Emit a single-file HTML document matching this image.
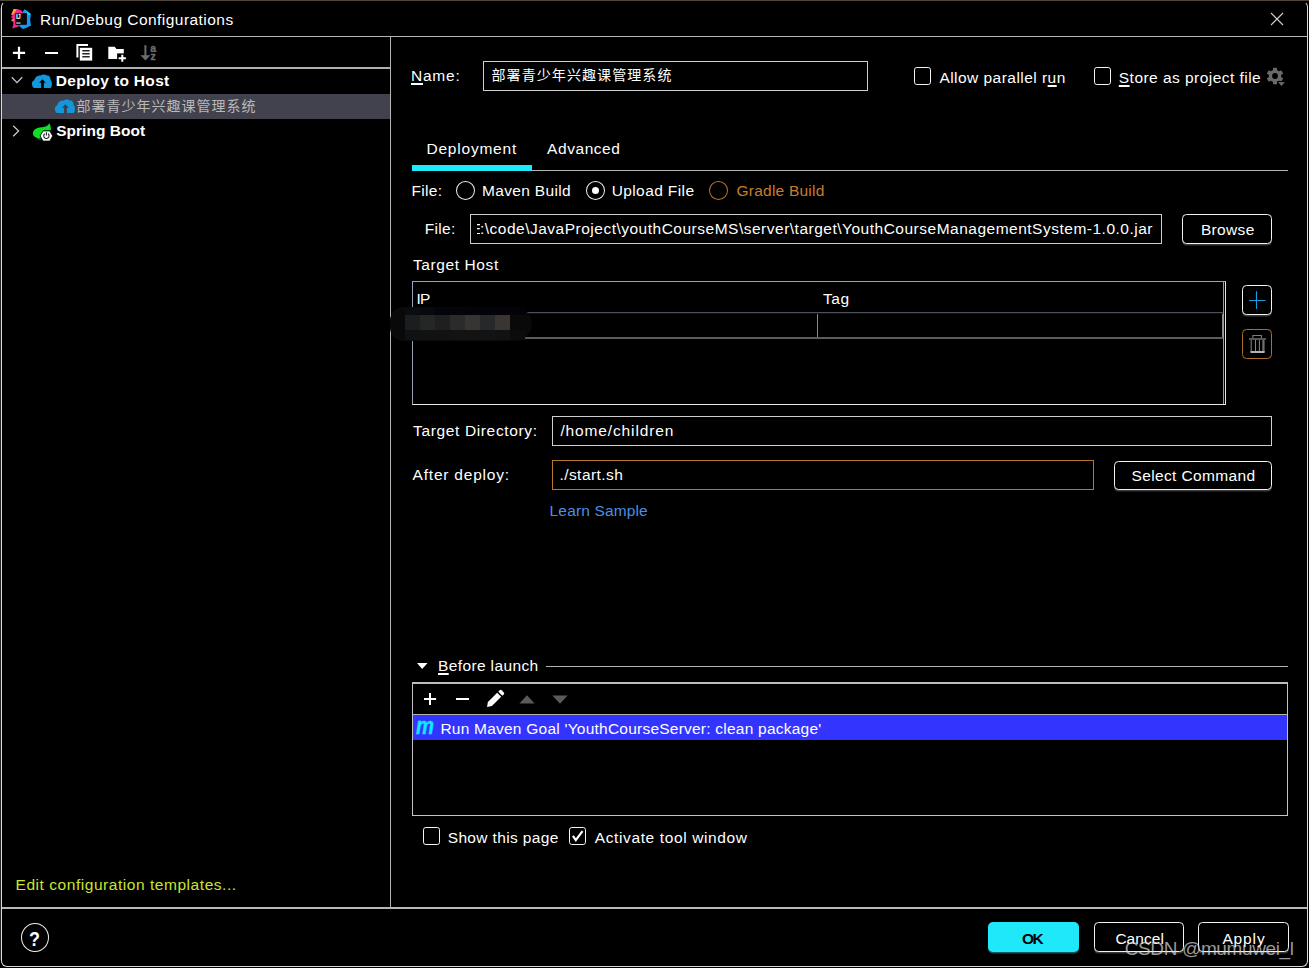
<!DOCTYPE html>
<html lang="zh-CN">
<head>
<meta charset="utf-8">
<title>Run/Debug Configurations</title>
<style>
html,body{margin:0;padding:0;background:#000;}
body{width:1309px;height:968px;position:relative;overflow:hidden;font-family:"Liberation Sans","Noto Sans CJK SC",sans-serif;color:#fff;}
.abs,.t,.ln,.box,.btn,.cb,.rd{position:absolute;box-sizing:border-box;}
.t{white-space:nowrap;line-height:24px;height:24px;}
.t u{text-decoration:underline;text-underline-offset:1.500px;text-decoration-thickness:1.500px;}
.ln{background:#b4b4b4;}
.box{border:1px solid #cecece;background:#000;}
.btn{border:1.600px solid #f2f2f2;border-radius:4.500px;background:#000;box-shadow:0 1.5px 0 #3a3a3a;}
.cb{width:17.500px;height:17.900px;border:1.600px solid #f4f4f4;border-radius:2.800px;background:#000;}
.rd{width:19.300px;height:19.200px;border:1.500px solid #f0f0f0;border-radius:50%;background:#000;}
svg{position:absolute;overflow:visible;}
</style>
</head>
<body>
<!-- outside strip + window frame -->
<div class="abs" id="topstrip" style="left:0;top:0;width:1309px;height:1px;background:#4f4538;"></div>
<div class="abs" id="leftedge" style="left:0;top:8px;width:1px;height:952px;background:#262626;"></div>
<div class="abs" id="frame" style="left:1px;top:1px;width:1307px;height:966px;border:1px solid #dadada;border-top-color:#000;border-radius:6px;background:#000;"></div>

<!-- title bar -->
<div class="ln" style="left:2px;top:36px;width:1305px;height:1px;"></div>
<!-- left toolbar bottom line -->
<div class="ln" style="left:2px;top:67px;width:388px;height:2px;background:#b0b0b0;"></div>
<!-- vertical divider -->
<div class="ln" style="left:390px;top:37px;width:1px;height:871px;"></div>
<!-- bottom separator -->
<div class="ln" style="left:2px;top:907px;width:1305px;height:2px;background:#b8b8b8;"></div>

<!-- tree selection -->
<div class="abs" id="sel" style="left:2px;top:94px;width:388px;height:25px;background:#42424f;"></div>

<!-- app icon -->
<svg id="ijicon" style="left:0px;top:0px;" width="40" height="36" viewBox="0 0 40 36">
  <polygon points="13.5,9.200 17,9 21,10.200 23,12.500 23,14 16,14 16,25 19.500,25 18.500,26.500 12.300,28.600 13.500,23.500 12.800,21 11.500,20.500 13,19 11,17 12.500,15.500 11.200,14.500 12.500,12" fill="#f3268a"/>
  <polygon points="13.500,9.200 16.800,9 15.600,11 14,13.500 12,14.800 11.200,14.500 12.500,12" fill="#fbb01f"/>
  <polygon points="11,20.300 13.300,18.400 14.300,20 13,21.400" fill="#fb8c1c"/>
  <polygon points="24.500,9.200 30.800,14 30.200,20 31,25.500 26,28 22.800,28.900 19.200,26.300 20,24.600 26.700,24.600 26.700,13.300 22.800,13.300 23,11.500" fill="#129cf0"/>
  <polygon points="24.500,9.200 30.800,14 28.300,15.300 26.700,12.300" fill="#18d2f4"/>
  <rect x="15.300" y="13.300" width="11.400" height="11.300" fill="#0d0609"/>
  <rect x="16.200" y="22.500" width="4.300" height="1.100" fill="#e6e6e6"/>
  <text x="15.900" y="18.700" font-family="Liberation Sans, sans-serif" font-size="6.400" font-weight="700" fill="#fff" letter-spacing="-0.300">IJ</text>
</svg>
<!-- close X -->
<svg style="left:1270px;top:12px;" width="14" height="14" viewBox="0 0 14 14"><path d="M1 1l12 12M13 1L1 13" stroke="#d0d0d0" stroke-width="1.1" fill="none"/></svg>

<!-- left toolbar -->
<svg style="left:12px;top:46px;" width="14" height="14" viewBox="0 0 14 14"><path d="M7 .8v12.2M.9 6.9h12.2" stroke="#fff" stroke-width="2.2" fill="none"/></svg>
<div class="abs" style="left:44.5px;top:51.5px;width:13px;height:2.4px;background:#fff;"></div>
<svg style="left:76px;top:44px;" width="17" height="17" viewBox="0 0 17 17">
  <path d="M1.4 13.5V1.1H12" stroke="#fff" stroke-width="2" fill="none"/>
  <rect x="3.8" y="3.8" width="12.4" height="12.8" fill="#fff"/>
  <path d="M6.3 6.8h7.4M6.3 9.8h7.4M6.3 12.8h7.4" stroke="#222" stroke-width="1.5" fill="none"/>
</svg>
<svg style="left:100px;top:40px;" width="30" height="26" viewBox="100 40 30 26">
  <path d="M108.300 46.700h6.400l1.800 2.200h7.300v10.200h-15.500z" fill="#fff"/>
  <path d="M117.100 53.400h7v6h-7z" fill="#000"/>
  <path d="M122.300 54.800v7M118.600 58.200h7.300" stroke="#fff" stroke-width="2" fill="none"/>
</svg>
<svg style="left:138px;top:40px;" width="24" height="26" viewBox="138 40 24 26">
  <path d="M145.400 45.200v11" stroke="#6c6c6c" stroke-width="2" fill="none"/>
  <path d="M140.400 55.300h10l-5 5.300z" fill="#6c6c6c"/>
  <text x="150.200" y="51.700" font-family="Liberation Sans, sans-serif" font-size="10.500" font-weight="700" fill="#6c6c6c" stroke="#6c6c6c" stroke-width=".35">a</text>
  <text x="150.600" y="60.400" font-family="Liberation Sans, sans-serif" font-size="10.500" font-weight="700" fill="#6c6c6c" stroke="#6c6c6c" stroke-width=".35">z</text>
</svg>

<!-- tree chevrons -->
<svg style="left:11px;top:76px;" width="12" height="8" viewBox="0 0 12 8"><path d="M.8 1.2l5.2 5.4 5.2-5.4" stroke="#c8c8c8" stroke-width="1.3" fill="none"/></svg>
<svg style="left:12px;top:125px;" width="8" height="12" viewBox="0 0 8 12"><path d="M1.2 .8l5.4 5.2-5.4 5.2" stroke="#c8c8c8" stroke-width="1.3" fill="none"/></svg>

<!-- cloud icons -->
<svg style="left:28px;top:70px;" width="60" height="48" viewBox="28 70 60 48">
  <path d="M34.200 88.100C32.600 87.600 31.900 85.500 31.900 83.500C31.900 81.800 33 80.600 34.300 80.200C34.800 78.300 35.800 77 37 76.300C38.500 75.300 40 75.400 41 75.600C41.800 74.800 42.800 74.500 43.800 74.500C45 74.500 46 75 46.800 75.600C48 75.400 49 75.800 49.500 76.500C50.300 77.500 50.600 78.800 50.600 80C51.500 81 51.900 82.500 51.900 84C51.900 86 51.200 87.500 50.600 88.100Z" fill="#1397dc"/>
  <path d="M42.400 79.200L45.800 82.700H43.900V88.300H41.100V82.700H39.100Z" fill="#000"/>
  <g transform="translate(23 25)">
    <path d="M34.200 88.100C32.600 87.600 31.900 85.500 31.900 83.500C31.900 81.800 33 80.600 34.300 80.200C34.800 78.300 35.800 77 37 76.300C38.500 75.300 40 75.400 41 75.600C41.800 74.800 42.800 74.500 43.800 74.500C45 74.500 46 75 46.800 75.600C48 75.400 49 75.800 49.500 76.500C50.300 77.500 50.600 78.800 50.600 80C51.500 81 51.900 82.500 51.900 84C51.900 86 51.200 87.500 50.600 88.100Z" fill="#1397dc"/>
    <path d="M42.400 79.200L45.800 82.700H43.900V88.300H41.100V82.700H39.100Z" fill="#3d3d4a"/>
  </g>
</svg>
<!-- spring boot icon -->
<svg style="left:28px;top:118px;" width="32" height="28" viewBox="28 118 32 28">
  <path d="M49.600 123.300c.9 2.200 1.400 4.600 1.300 7l-7.500 .3-3 5.300 1.300 2.200c-3 .3-5.600 .2-7.300-1.600-2.300-2.400-1.700-5.800 1.100-7.600 2.500-1.600 5.700-1.300 8.300-1.900 2.500-.6 4.500-1.700 5.800-3.700z" fill="#0be322"/>
  <path d="M36.800 138.300c1.400 .4 2.800 .5 4.300 .4l.4 .7c-1.700 .3-3.400 0-4.700-1.100z" fill="#0be322"/>
  <path d="M43 130.900h6.800l2.900 5-2.900 5.200H43l-2.900-5.200z" fill="#fff" stroke="#000" stroke-width=".8"/>
  <path d="M44.700 133.700a2.700 2.700 0 1 0 3.400 0" fill="none" stroke="#222" stroke-width="1.100"/>
  <path d="M46.400 132.300v3.300" stroke="#222" stroke-width="1.100"/>
</svg>

<!-- gear -->
<svg style="left:1267px;top:68px;" width="20" height="20" viewBox="0 0 20 20">
  <g fill="#6a6a6a">
   <circle cx="8" cy="8" r="6.200"/>
   <rect x="6" y="-0.300" width="4" height="16.600" rx=".6"/>
   <rect x="6" y="-0.300" width="4" height="16.600" rx=".6" transform="rotate(60 8 8)"/>
   <rect x="6" y="-0.300" width="4" height="16.600" rx=".6" transform="rotate(120 8 8)"/>
   <path d="M11 14h6.900l-3.450 4z"/>
  </g>
  <circle cx="8" cy="8" r="2.900" fill="#000"/>
  <path d="M10.300 13.600h8.200" stroke="#000" stroke-width=".9"/>
</svg>

<!-- before-launch toolbar -->
<svg style="left:424px;top:693px;" width="13" height="13" viewBox="0 0 13 13"><path d="M6 0v12.100M0 6h12.100" stroke="#fff" stroke-width="2" fill="none"/></svg>
<div class="abs" style="left:456px;top:698px;width:12.500px;height:2.200px;background:#fff;"></div>
<svg style="left:486px;top:689px;" width="19" height="19" viewBox="0 0 19 19">
  <path d="M1 18l.9-4.900L11.200 3.800l4 4L5.900 17.100z" fill="#fff"/>
  <path d="M12.300 2.700l1.500-1.500a1.300 1.300 0 0 1 1.800 0l2.200 2.200a1.300 1.300 0 0 1 0 1.800l-1.500 1.500z" fill="#fff"/>
</svg>
<svg style="left:519px;top:695px;" width="16" height="9" viewBox="0 0 16 9"><path d="M8 .3l7.600 8.200H.4z" fill="#5a5a5a"/></svg>
<svg style="left:552px;top:695px;" width="16" height="9" viewBox="0 0 16 9"><path d="M8 8.700L15.600 .5H.4z" fill="#5a5a5a"/></svg>


<!-- Name input -->
<div class="box" style="left:483px;top:61px;width:385px;height:30px;"></div>
<div class="cb" style="left:913.700px;top:67.200px;"></div>
<div class="cb" style="left:1093.700px;top:67.200px;"></div>

<!-- tabs -->
<div class="ln" style="left:412px;top:170px;width:876px;height:1px;"></div>
<div class="abs" style="left:412px;top:165px;width:120px;height:6px;background:#1fe8fb;"></div>

<!-- radios -->
<div class="rd" style="left:456.100px;top:181px;"></div>
<div class="rd" style="left:586.200px;top:181px;"></div>
<div class="abs" style="left:592.400px;top:187.200px;width:7px;height:7px;border-radius:50%;background:#fff;"></div>
<div class="rd" style="left:709px;top:181px;border-color:#b9762c;"></div>

<!-- file input -->
<div class="box" style="left:470px;top:214px;width:692px;height:30px;"></div>
<div class="btn" style="left:1182.200px;top:214px;width:89.800px;height:29.800px;"></div>

<!-- target host table -->
<div class="abs" style="left:412px;top:281px;width:814px;height:124px;border:1px solid #96a3b6;border-right-color:#e8e8e8;border-bottom-color:#e8e8e8;"></div>
<div class="abs" style="left:413px;top:282px;width:811px;height:122px;border-right:1px solid #929fb3;"></div>
<div class="ln" style="left:413px;top:312px;width:810px;height:1px;background:#50505c;"></div>
<div class="ln" style="left:413px;top:313px;width:810px;height:1px;background:#000094;"></div>
<div class="ln" style="left:817px;top:314px;width:1px;height:24px;background:#8a8a8a;"></div>
<div class="ln" style="left:1222px;top:314px;width:1px;height:24px;background:#8a8a8a;"></div>
<div class="ln" style="left:413px;top:337px;width:810px;height:2px;background:#5c5c5c;"></div>
<!-- blur blob -->
<div class="abs" style="left:390px;top:307px;width:142px;height:34px;border-radius:16px 20px 20px 16px;background:#09090a;"></div>
<div class="abs" style="left:405px;top:307px;width:15px;height:8px;background:#0b0c11;"></div>
<div class="abs" style="left:420px;top:307px;width:15px;height:8px;background:#08090f;"></div>
<div class="abs" style="left:435px;top:307px;width:15px;height:8px;background:#04040c;"></div>
<div class="abs" style="left:450px;top:307px;width:15px;height:8px;background:#04040b;"></div>
<div class="abs" style="left:465px;top:307px;width:15px;height:8px;background:#03030a;"></div>
<div class="abs" style="left:480px;top:307px;width:15px;height:8px;background:#03030a;"></div>
<div class="abs" style="left:495px;top:307px;width:15px;height:8px;background:#030309;"></div>
<div class="abs" style="left:510px;top:307px;width:15px;height:8px;background:#020208;"></div>
<div class="abs" style="left:405px;top:315px;width:15px;height:15px;background:#1c1d1f;"></div>
<div class="abs" style="left:420px;top:315px;width:15px;height:15px;background:#252726;"></div>
<div class="abs" style="left:435px;top:315px;width:15px;height:15px;background:#1f1f1f;"></div>
<div class="abs" style="left:450px;top:315px;width:15px;height:15px;background:#2c2b29;"></div>
<div class="abs" style="left:465px;top:315px;width:15px;height:15px;background:#363533;"></div>
<div class="abs" style="left:480px;top:315px;width:15px;height:15px;background:#27282a;"></div>
<div class="abs" style="left:495px;top:315px;width:15px;height:15px;background:#3b3532;"></div>
<div class="abs" style="left:405px;top:330px;width:15px;height:10px;background:#101113;"></div>
<div class="abs" style="left:420px;top:330px;width:15px;height:10px;background:#111211;"></div>
<div class="abs" style="left:435px;top:330px;width:15px;height:10px;background:#121212;"></div>
<div class="abs" style="left:450px;top:330px;width:15px;height:10px;background:#131313;"></div>
<div class="abs" style="left:465px;top:330px;width:15px;height:10px;background:#131313;"></div>
<div class="abs" style="left:480px;top:330px;width:15px;height:10px;background:#131313;"></div>
<div class="abs" style="left:495px;top:330px;width:15px;height:10px;background:#121212;"></div>
<div class="abs" style="left:510px;top:330px;width:15px;height:10px;background:#0c0c0c;"></div>

<!-- add / delete buttons -->
<div class="btn" style="left:1242px;top:285px;width:30px;height:30px;"></div>
<svg style="left:1242px;top:285px;" width="30" height="30" viewBox="0 0 30 30"><path d="M14.500 6.300v17.700M7 15.500h16.500" stroke="#1a9be0" stroke-width="1.100" fill="none"/></svg>
<div class="btn" style="left:1242px;top:329px;width:30px;height:30px;border-color:#ad6f27;box-shadow:none;"></div>
<svg style="left:1242px;top:329px;" width="30" height="30" viewBox="0 0 30 30"><rect x="7" y="9.100" width="17" height="1.800" fill="#5e5e5e"/><path d="M10.900 9.200V6.500h8.500v2.700" stroke="#7c7c7c" stroke-width="1.100" fill="none"/><rect x="8.500" y="11" width="1.500" height="12" fill="#5a5a5a"/><rect x="20.300" y="11" width="2.300" height="12" fill="#6e6e6e"/><rect x="8.500" y="22" width="14.100" height="2" fill="#b4b4b4"/><path d="M13.500 11v11M17.400 11v11" stroke="#858585" stroke-width="1" fill="none"/></svg>

<!-- target dir / after deploy -->
<div class="box" style="left:552px;top:416px;width:720px;height:30px;"></div>
<div class="box" style="left:552px;top:460px;width:542px;height:30px;border-color:#b9762c;"></div>
<div class="btn" style="left:1113.800px;top:460.600px;width:158.300px;height:29.600px;"></div>

<!-- before launch -->
<svg style="left:416px;top:662px;" width="12" height="8" viewBox="0 0 12 8"><path d="M1 1h10.5L6.2 7z" fill="#fff"/></svg>
<div class="ln" style="left:546px;top:666px;width:742px;height:1px;"></div>
<div class="abs" style="left:412px;top:682px;width:876px;height:134px;border:1px solid #c4c4c4;border-top:2px solid #bdbdbd;"></div>
<div class="ln" style="left:413px;top:714px;width:874px;height:1px;"></div>
<div class="abs" style="left:413px;top:715px;width:874px;height:25px;background:#3434ff;"></div>

<div class="cb" style="left:422.800px;top:827.200px;"></div>
<div class="cb" style="left:568.800px;top:827.200px;"></div>
<svg style="left:568.800px;top:827.200px;" width="18" height="18" viewBox="0 0 18 18"><path d="M3.900 8.900l2.900 4.200 6.700-9" stroke="#fff" stroke-width="2.200" fill="none"/></svg>

<!-- bottom buttons -->
<div class="abs" style="left:21px;top:923px;width:28.300px;height:29.300px;border:1.400px solid #f0f0f0;border-radius:50%;"></div>
<div class="abs" style="left:988.300px;top:922.300px;width:90.600px;height:30.200px;border-radius:5px;background:#1fe8fb;box-shadow:0 1.5px 0 #0a5a66;"></div>
<div class="btn" style="left:1093.500px;top:922.300px;width:90.500px;height:30.200px;"></div>
<div class="btn" style="left:1198.200px;top:922.300px;width:90.500px;height:30.200px;"></div>

<div class="abs" style="left:477px;top:215px;width:3.300px;height:28px;overflow:hidden;"><span class="t" style="left:-6.300px;top:2px;font-size:15.500px;color:#fff;">E</span></div>
<span class="t" id="title" style="left:40.00px;top:8.00px;font-size:15.5px;font-weight:400;color:#fff;letter-spacing:0.456px;">Run/Debug Configurations</span>
<span class="t" id="dep" style="left:55.70px;top:69.00px;font-size:15.5px;font-weight:700;color:#fff;letter-spacing:0.323px;">Deploy to Host</span>
<span class="t" id="cn1" style="left:76.60px;top:94.00px;font-size:14px;font-weight:400;color:#b9b9b9;letter-spacing:1.0px;">部署青少年兴趣课管理系统</span>
<span class="t" id="sb" style="left:56.20px;top:119.00px;font-size:15.5px;font-weight:700;color:#fff;letter-spacing:0.028px;">Spring Boot</span>
<span class="t" id="name" style="left:411.00px;top:64.00px;font-size:15.5px;font-weight:400;color:#fff;letter-spacing:0.764px;"><u>N</u>ame:</span>
<span class="t" id="cn2" style="left:491.50px;top:63.00px;font-size:14px;font-weight:400;color:#fff;letter-spacing:1.082px;">部署青少年兴趣课管理系统</span>
<span class="t" id="apr" style="left:939.40px;top:66.00px;font-size:15.5px;font-weight:400;color:#fff;letter-spacing:0.464px;">Allow parallel r<u>u</u>n</span>
<span class="t" id="spf" style="left:1118.80px;top:66.00px;font-size:15.5px;font-weight:400;color:#fff;letter-spacing:0.462px;"><u>S</u>tore as project file</span>
<span class="t" id="tab1" style="left:426.50px;top:137.00px;font-size:15.5px;font-weight:400;color:#fff;letter-spacing:0.778px;">Deployment</span>
<span class="t" id="tab2" style="left:547.10px;top:137.00px;font-size:15.5px;font-weight:400;color:#fff;letter-spacing:0.554px;">Advanced</span>
<span class="t" id="file1" style="left:411.60px;top:179.00px;font-size:15.5px;font-weight:400;color:#fff;letter-spacing:0.306px;">File:</span>
<span class="t" id="mvn" style="left:482.00px;top:179.00px;font-size:15.5px;font-weight:400;color:#fff;letter-spacing:0.332px;">Maven Build</span>
<span class="t" id="upl" style="left:611.70px;top:179.00px;font-size:15.5px;font-weight:400;color:#fff;letter-spacing:0.392px;">Upload File</span>
<span class="t" id="grd" style="left:736.60px;top:179.00px;font-size:15.5px;font-weight:400;color:#c97d2c;letter-spacing:0.22px;">Gradle Build</span>
<span class="t" id="file2" style="left:424.70px;top:217.00px;font-size:15.5px;font-weight:400;color:#fff;letter-spacing:0.306px;">File:</span>
<span class="t" id="browse" style="left:1200.90px;top:218.00px;font-size:15.5px;font-weight:400;color:#fff;letter-spacing:0.347px;">Browse</span>
<span class="t" id="th" style="left:412.90px;top:253.00px;font-size:15.5px;font-weight:400;color:#fff;letter-spacing:0.605px;">Target Host</span>
<span class="t" id="ip" style="left:416.50px;top:287.00px;font-size:15.5px;font-weight:400;color:#fff;letter-spacing:-0.706px;">IP</span>
<span class="t" id="tag" style="left:822.90px;top:287.00px;font-size:15.5px;font-weight:400;color:#fff;letter-spacing:0.665px;">Tag</span>
<span class="t" id="td" style="left:413.00px;top:419.00px;font-size:15.5px;font-weight:400;color:#fff;letter-spacing:0.644px;">Target Directory:</span>
<span class="t" id="home" style="left:560.40px;top:419.00px;font-size:15.5px;font-weight:400;color:#fff;letter-spacing:0.866px;">/home/children</span>
<span class="t" id="ad" style="left:412.60px;top:463.00px;font-size:15.5px;font-weight:400;color:#fff;letter-spacing:0.782px;">After deploy:</span>
<span class="t" id="start" style="left:559.40px;top:463.00px;font-size:15.5px;font-weight:400;color:#fff;letter-spacing:0.454px;">./start.sh</span>
<span class="t" id="selc" style="left:1131.50px;top:464.00px;font-size:15.5px;font-weight:400;color:#fff;letter-spacing:0.364px;">Select Command</span>
<span class="t" id="learn" style="left:549.60px;top:499.00px;font-size:15.5px;font-weight:400;color:#4a8fe6;letter-spacing:0.147px;">Learn Sample</span>
<span class="t" id="bl" style="left:438.00px;top:654.00px;font-size:15.5px;font-weight:400;color:#fff;letter-spacing:0.373px;"><u>B</u>efore launch</span>
<span class="t" id="run" style="left:440.40px;top:717.00px;font-size:15.5px;font-weight:400;color:#fff;letter-spacing:0.23px;">Run Maven Goal 'YouthCourseServer: clean package'</span>
<span class="t" id="stp" style="left:447.70px;top:826.00px;font-size:15.5px;font-weight:400;color:#fff;letter-spacing:0.356px;">Show this page</span>
<span class="t" id="atw" style="left:594.80px;top:826.00px;font-size:15.5px;font-weight:400;color:#fff;letter-spacing:0.614px;">Activate tool window</span>
<span class="t" id="edit" style="left:15.50px;top:873.00px;font-size:15.5px;font-weight:400;color:#cbe52e;letter-spacing:0.547px;">Edit configuration templates...</span>
<span class="t" id="ok" style="left:1022.10px;top:927.00px;font-size:15.5px;font-weight:700;color:#000;letter-spacing:-1.556px;">OK</span>
<span class="t" id="cancel" style="left:1115.40px;top:927.00px;font-size:15.5px;font-weight:400;color:#fff;letter-spacing:0.039px;">Cancel</span>
<span class="t" id="apply" style="left:1222.40px;top:927.00px;font-size:15.5px;font-weight:400;color:#fff;letter-spacing:0.869px;">Apply</span>
<span class="t" id="q" style="left:29.10px;top:927.00px;font-size:21px;font-weight:700;color:#fff;letter-spacing:0px;transform:scaleX(.85);transform-origin:0 50%;">?</span>
<span class="t" id="wm" style="left:1124.70px;top:937.00px;font-size:19px;font-weight:400;color:rgba(215,215,215,0.72);letter-spacing:-0.369px;">CSDN @mumuwei_l</span>
<span class="t" id="mvnm" style="left:416.30px;top:714.00px;font-size:23px;font-weight:700;color:#0aeaff;letter-spacing:0px;font-style:italic;transform:scaleX(.88);transform-origin:0 50%;-webkit-text-stroke:0.300px #0aeaff;">m</span>
<span class="t" id="path" style="left:479.90px;top:217.00px;font-size:15.5px;font-weight:400;color:#fff;letter-spacing:0.502px;">:\code\JavaProject\youthCourseMS\server\target\YouthCourseManagementSystem-1.0.0.jar</span>
</body>
</html>
